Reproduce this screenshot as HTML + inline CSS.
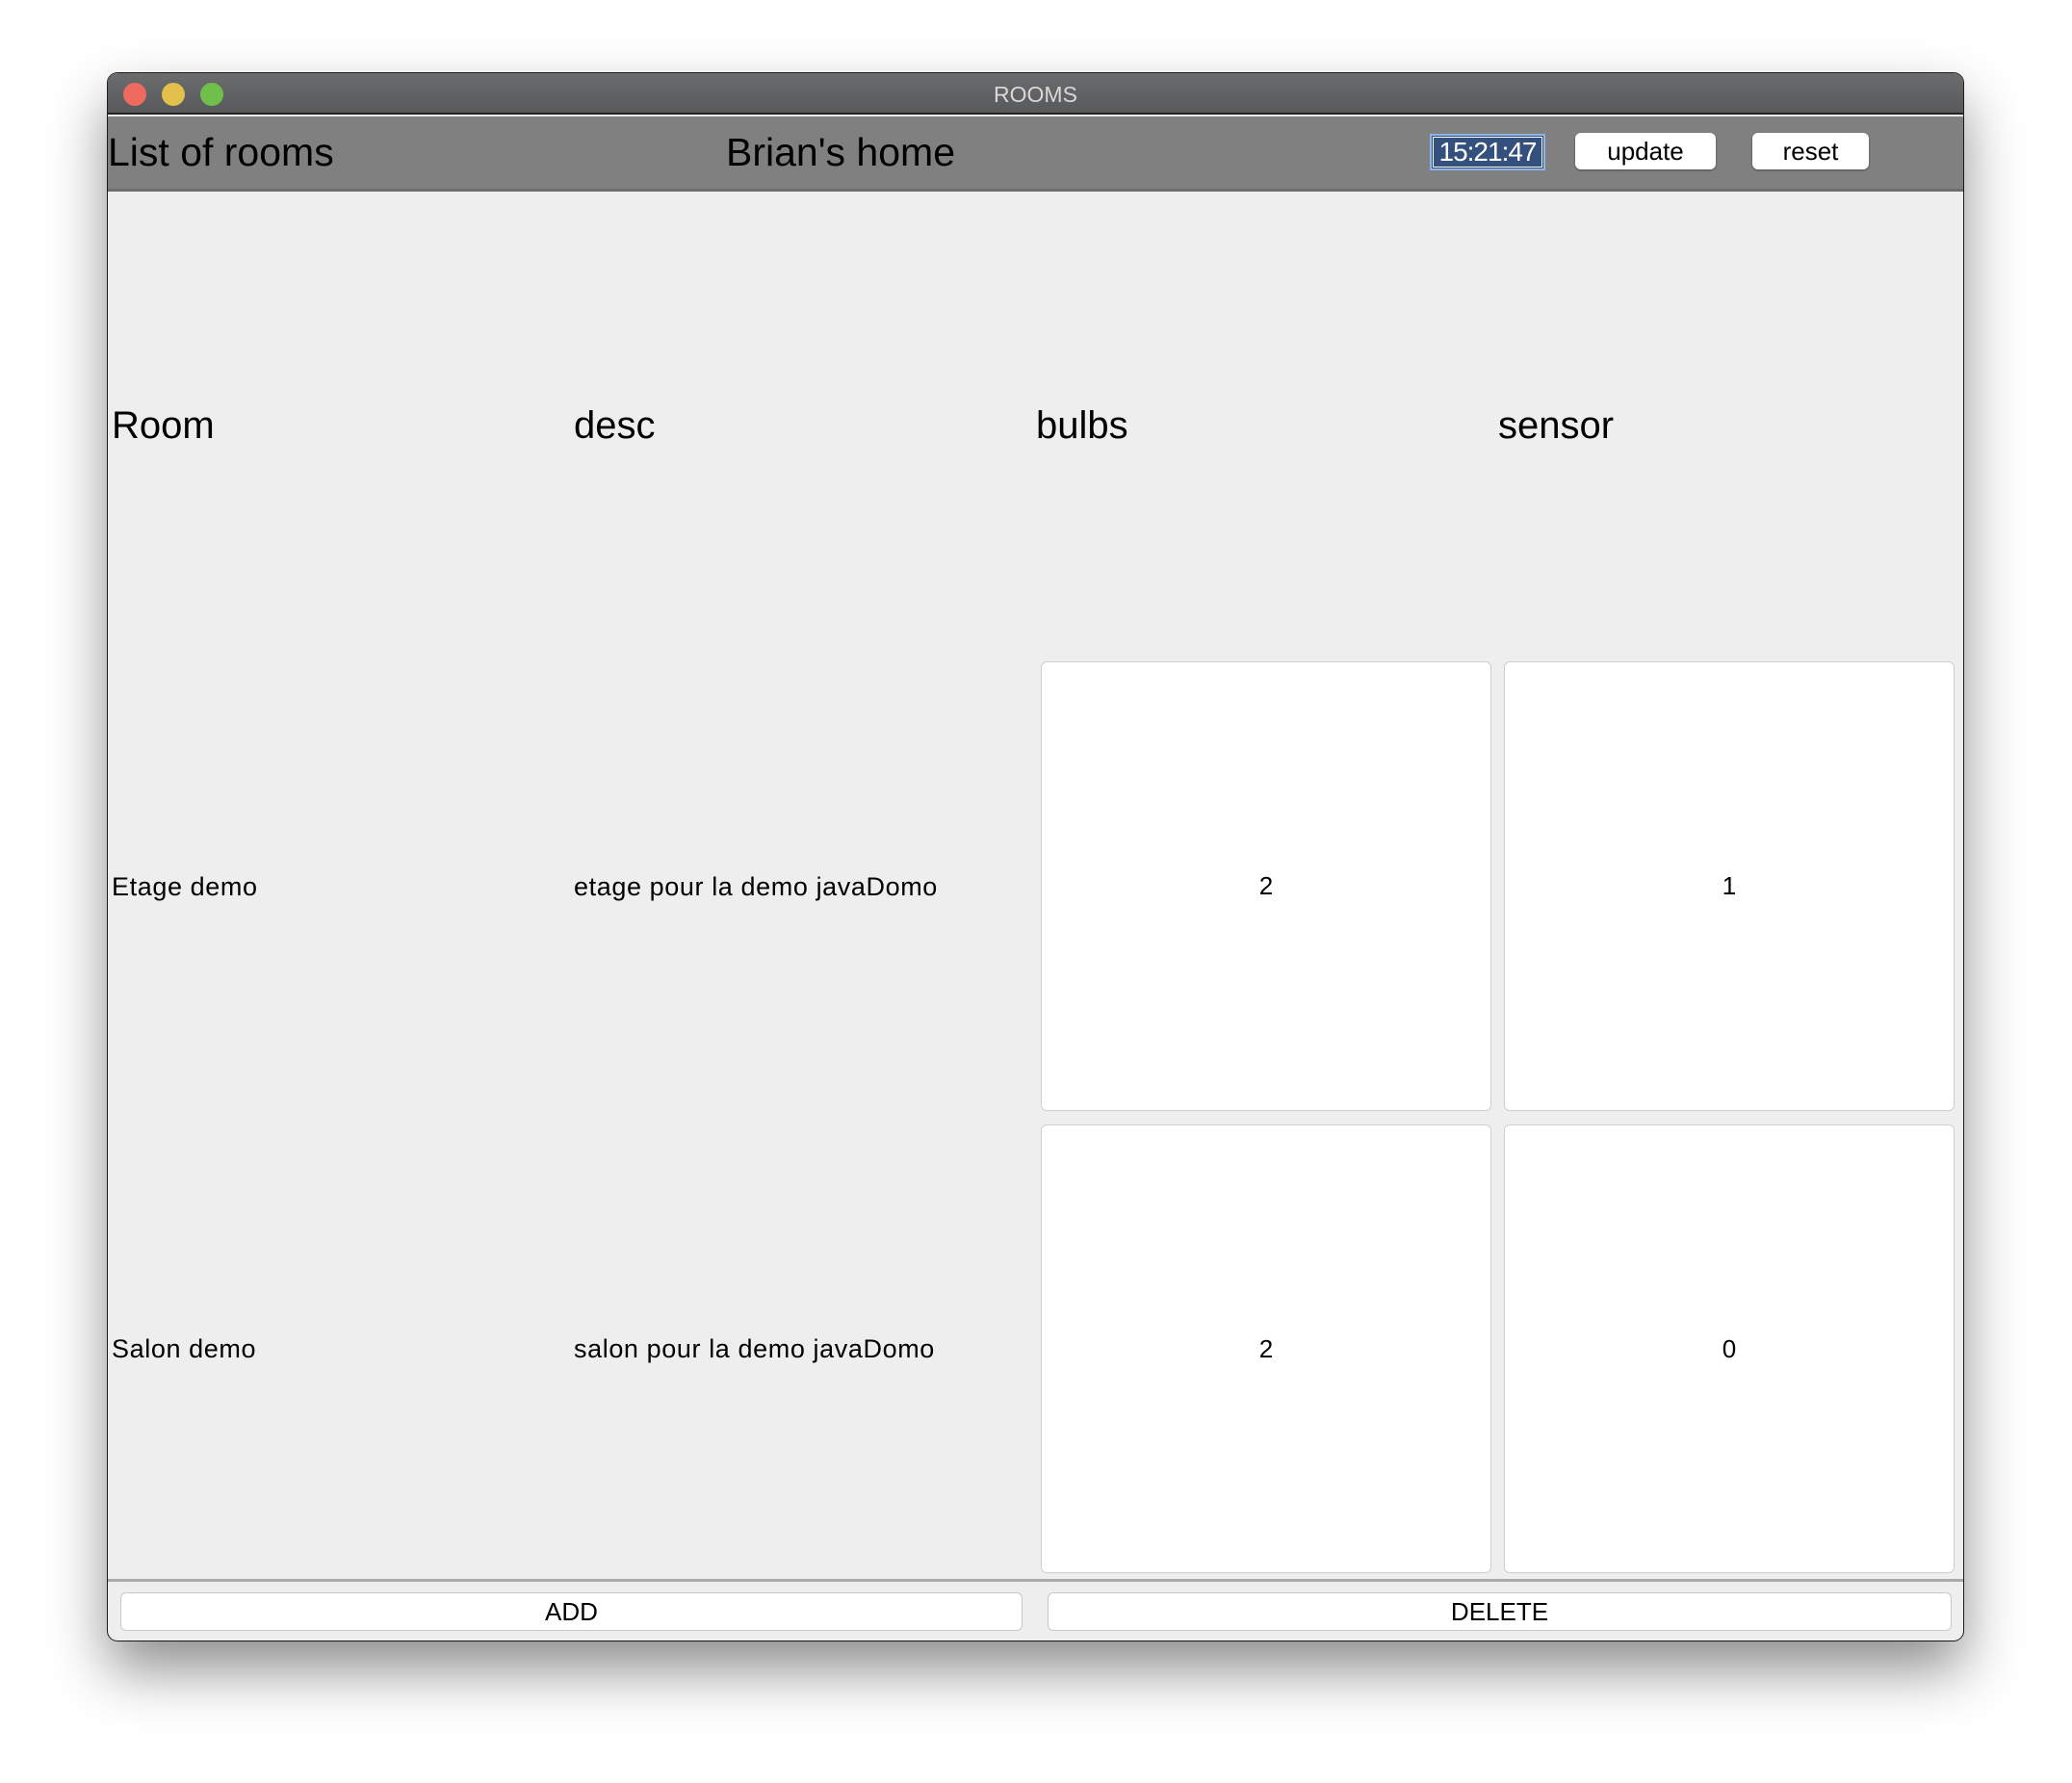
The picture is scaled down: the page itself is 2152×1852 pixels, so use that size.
<!DOCTYPE html>
<html><head><meta charset="utf-8"><style>
*{margin:0;padding:0;box-sizing:border-box}
body{width:2152px;height:1852px;background:#fff;position:relative;overflow:hidden;font-family:"Liberation Sans",Arial,sans-serif}
.win{position:absolute;left:112px;top:76px;width:1927px;height:1628px;border-radius:10px;background:#eee;box-shadow:0 30px 60px rgba(0,0,0,.45),0 0 0 1px #222;overflow:hidden}
.title{position:absolute;left:0;top:0;width:100%;height:43px;background:linear-gradient(#6b6c6e,#58595b);border-bottom:2px solid #222}
.dot{position:absolute;top:10px;width:24px;height:24px;border-radius:50%}
.ttl{position:absolute;left:0;width:100%;top:9px;text-align:center;color:#d8d8d8;font-size:23px}
.hdr{position:absolute;left:0;top:45px;width:100%;height:78px;background:#808080;border-bottom:3px solid #6e6e6e}
.a{position:absolute;white-space:nowrap;color:#000}
.big{font-size:40px}
.btn{position:absolute;background:#fff;border-radius:6px;text-align:center;font-size:26px;box-shadow:0 1px 2px rgba(0,0,0,.4)}
.cell{position:absolute;background:#fff;border:1px solid #cfcfcf;border-radius:6px;font-size:26px;display:flex;align-items:center;justify-content:center}
.row{font-size:27px;letter-spacing:0.6px}
.bb{position:absolute;background:#fff;border:1px solid #c8c8c8;border-radius:6px;font-size:26px;text-align:center;line-height:38px}
</style></head><body>
<div class="win">
<div class="title">
<div class="dot" style="left:16px;background:#ee6a5e"></div>
<div class="dot" style="left:56px;background:#e3c04d"></div>
<div class="dot" style="left:96px;background:#6fbf4a"></div>
<div class="ttl">ROOMS</div>
</div>
<div class="hdr">
<div class="a big" style="left:0px;top:14px;font-size:41px">List of rooms</div>
<div class="a big" style="left:642px;top:14px;font-size:41px">Brian's home</div>
<div class="a" style="left:1373px;top:18px;width:120px;height:38px;background:#34507c;border:2px solid #8fb4ea;outline:1px solid #fff;outline-offset:-4px;color:#fff;font-size:28px;line-height:34px;text-align:center;letter-spacing:-1px">15:21:47</div>
<div class="btn" style="left:1524px;top:17px;width:146px;height:38px;line-height:38px">update</div>
<div class="btn" style="left:1708px;top:17px;width:121px;height:38px;line-height:38px">reset</div>
</div>
<div class="a big" style="left:4px;top:344px">Room</div>
<div class="a big" style="left:484px;top:344px">desc</div>
<div class="a big" style="left:964px;top:344px">bulbs</div>
<div class="a big" style="left:1444px;top:344px">sensor</div>
<div class="a row" style="left:4px;top:830px">Etage demo</div>
<div class="a row" style="left:484px;top:830px">etage pour la demo javaDomo</div>
<div class="a row" style="left:4px;top:1310px">Salon demo</div>
<div class="a row" style="left:484px;top:1310px">salon pour la demo javaDomo</div>
<div class="cell" style="left:969px;top:611px;width:468px;height:467px">2</div>
<div class="cell" style="left:1450px;top:611px;width:468px;height:467px">1</div>
<div class="cell" style="left:969px;top:1092px;width:468px;height:466px">2</div>
<div class="cell" style="left:1450px;top:1092px;width:468px;height:466px">0</div>
<div style="position:absolute;left:0;top:1564px;width:100%;height:3px;background:#aaa"></div>
<div class="bb" style="left:13px;top:1578px;width:937px;height:40px">ADD</div>
<div class="bb" style="left:976px;top:1578px;width:939px;height:40px">DELETE</div>
</div>
</body></html>
